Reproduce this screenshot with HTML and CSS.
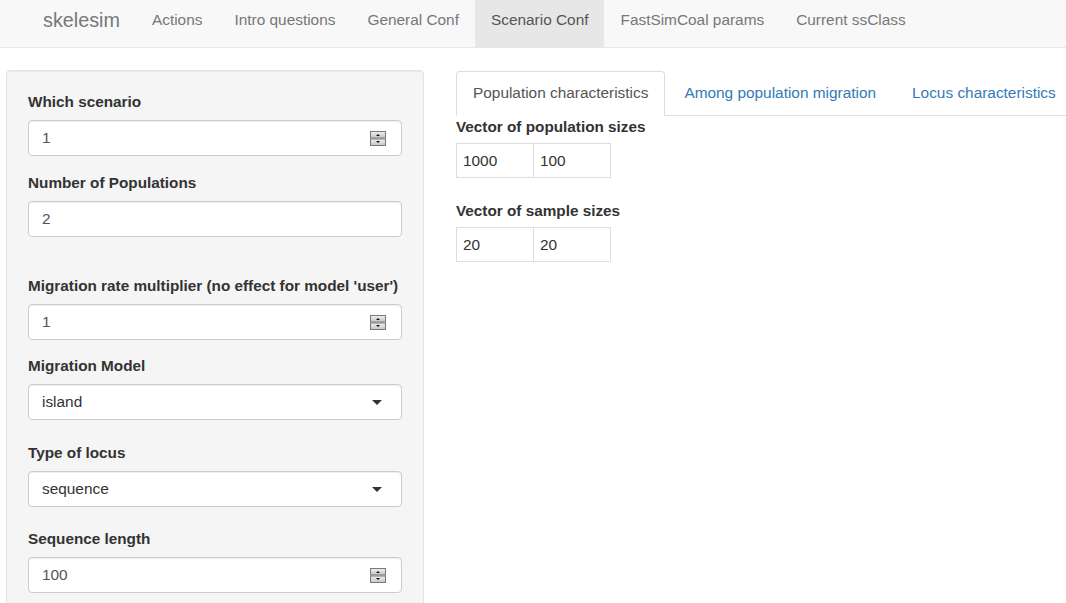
FILE: index.html
```html
<!DOCTYPE html>
<html>
<head>
<meta charset="utf-8">
<title>skelesim</title>
<link rel="stylesheet" href="styles.css">
</head>
<body>
<nav class="navbar">
  <span class="brand">skelesim</span>
  <ul class="nav">
    <li class="nav-item">Actions</li>
    <li class="nav-item">Intro questions</li>
    <li class="nav-item">General Conf</li>
    <li class="nav-item active">Scenario Conf</li>
    <li class="nav-item">FastSimCoal params</li>
    <li class="nav-item">Current ssClass</li>
  </ul>
</nav>

<div class="page">
  <aside class="well">
    <div class="group g1">
      <label class="lbl">Which scenario</label>
      <div class="input">
        <span class="val">1</span>
        <svg class="spin" width="16" height="15" viewBox="0 0 16 15">
          <defs>
            <linearGradient id="sg" x1="0" y1="0" x2="0" y2="1">
              <stop offset="0" stop-color="#f0f0f0"/>
              <stop offset="1" stop-color="#c4c4c4"/>
            </linearGradient>
          </defs>
          <rect x="0.5" y="0.5" width="15" height="6.5" fill="url(#sg)" stroke="#7a7a7a"/>
          <rect x="0.5" y="8" width="15" height="6.5" fill="url(#sg)" stroke="#7a7a7a"/>
          <path d="M6 5 L10 5 L8 3 Z" fill="#111"/>
          <path d="M6 10 L10 10 L8 12 Z" fill="#111"/>
        </svg>
      </div>
    </div>
    <div class="group g2">
      <label class="lbl">Number of Populations</label>
      <div class="input"><span class="val">2</span></div>
    </div>
    <div class="group g3">
      <label class="lbl">Migration rate multiplier (no effect for model 'user')</label>
      <div class="input">
        <span class="val">1</span>
        <svg class="spin" width="16" height="15" viewBox="0 0 16 15">
          <rect x="0.5" y="0.5" width="15" height="6.5" fill="url(#sg)" stroke="#7a7a7a"/>
          <rect x="0.5" y="8" width="15" height="6.5" fill="url(#sg)" stroke="#7a7a7a"/>
          <path d="M6 5 L10 5 L8 3 Z" fill="#111"/>
          <path d="M6 10 L10 10 L8 12 Z" fill="#111"/>
        </svg>
      </div>
    </div>
    <div class="group g4">
      <label class="lbl">Migration Model</label>
      <div class="input select">
        <span class="sval">island</span>
        <span class="caret"></span>
      </div>
    </div>
    <div class="group g5">
      <label class="lbl">Type of locus</label>
      <div class="input select">
        <span class="sval">sequence</span>
        <span class="caret"></span>
      </div>
    </div>
    <div class="group g6">
      <label class="lbl">Sequence length</label>
      <div class="input">
        <span class="val">100</span>
        <svg class="spin" width="16" height="15" viewBox="0 0 16 15">
          <rect x="0.5" y="0.5" width="15" height="6.5" fill="url(#sg)" stroke="#7a7a7a"/>
          <rect x="0.5" y="8" width="15" height="6.5" fill="url(#sg)" stroke="#7a7a7a"/>
          <path d="M6 5 L10 5 L8 3 Z" fill="#111"/>
          <path d="M6 10 L10 10 L8 12 Z" fill="#111"/>
        </svg>
      </div>
    </div>
  </aside>

  <main class="main">
    <ul class="tabs">
      <li class="tab active">Population characteristics</li>
      <li class="tab">Among population migration</li>
      <li class="tab">Locus characteristics</li>
    </ul>
    <div class="mgroup m1">
      <label class="lbl">Vector of population sizes</label>
      <div class="matrix">
        <span class="cell">1000</span><span class="cell">100</span>
      </div>
    </div>
    <div class="mgroup m2">
      <label class="lbl">Vector of sample sizes</label>
      <div class="matrix">
        <span class="cell">20</span><span class="cell">20</span>
      </div>
    </div>
  </main>
</div>
</body>
</html>
```

FILE: styles.css
```css
html, body {
  margin: 0;
  padding: 0;
  overflow: hidden;
  background: #fff;
  font-family: "Liberation Sans", Arial, sans-serif;
  font-size: 15.4px;
  line-height: 22px;
  color: #333;
}

.navbar {
  display: flex;
  align-items: stretch;
  height: 47px;
  background: #f8f8f8;
  border-bottom: 1px solid #e7e7e7;
  padding-left: 27px;
}

.brand {
  font-size: 19.8px;
  color: #777;
  padding: 9px 16px 0 16px;
  line-height: 22px;
}

.nav {
  display: flex;
  list-style: none;
  margin: 0;
  padding: 0;
}

.nav-item {
  color: #777;
  padding: 9px 16px 0 16px;
  white-space: nowrap;
}

.nav-item.active {
  background: #e7e7e7;
  color: #555;
}

.page {
  display: flex;
  align-items: flex-start;
  padding: 22px 0 0 6px;
  gap: 32px;
}

.well {
  flex: 0 0 418px;
  box-sizing: border-box;
  background: #f5f5f5;
  border: 1px solid #e3e3e3;
  border-radius: 4px;
  box-shadow: inset 0 1px 1px rgba(0,0,0,.05);
  padding: 20px 21px 20px 21px;
}

.group {
  display: flex;
  flex-direction: column;
}

.g2 { margin-top: 16px; }
.g3 { margin-top: 38px; }
.g4 { margin-top: 15px; }
.g5 { margin-top: 22px; }
.g6 { margin-top: 21px; }

.lbl {
  font-weight: bold;
  font-size: 15.3px;
  color: #333;
  margin-bottom: 7px;
  white-space: nowrap;
}

.input {
  box-sizing: border-box;
  height: 36px;
  background: #fff;
  border: 1px solid #ccc;
  border-radius: 4px;
  box-shadow: inset 0 1px 1px rgba(0,0,0,.075);
  display: flex;
  align-items: center;
  justify-content: space-between;
  padding: 0 15px 0 13px;
}

.val {
  color: #555;
}

.spin {
  display: block;
  margin-top: 1px;
}

.select {
  padding-left: 13px;
  padding-right: 19px;
}

.sval {
  color: #333;
}

.caret {
  width: 0;
  height: 0;
  border-left: 5px solid transparent;
  border-right: 5px solid transparent;
  border-top: 5px solid #333;
}

.main {
  flex: 1;
  min-width: 0;
  padding-top: 1px;
}

.tabs {
  display: flex;
  list-style: none;
  margin: 0;
  padding: 0;
  border-bottom: 1px solid #ddd;
  white-space: nowrap;
}

.tab {
  padding: 10px 16px 11px 16px;
  margin-right: 2px;
  margin-bottom: -1px;
  color: #337ab7;
  border: 1px solid transparent;
  border-radius: 4px 4px 0 0;
}

.tab.active {
  color: #555;
  background: #fff;
  border-color: #ddd;
  border-bottom-color: transparent;
}

.mgroup {
  display: flex;
  flex-direction: column;
  align-items: flex-start;
}

.m1 { margin-top: 0; }
.m2 { margin-top: 22px; }

.mgroup .lbl {
  margin-bottom: 5px;
}

.matrix {
  display: flex;
}

.cell {
  box-sizing: border-box;
  width: 78px;
  height: 35px;
  border: 1px solid #ddd;
  padding: 6px 6px;
  color: #333;
  background: #fff;
}

.cell + .cell {
  margin-left: -1px;
}
```
